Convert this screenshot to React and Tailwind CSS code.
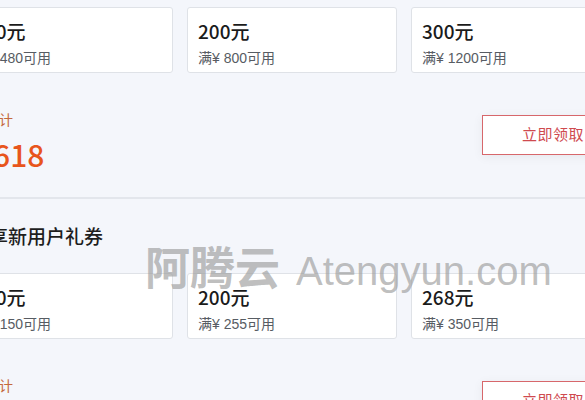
import React from "react";

const sections = [
  {
    heading: null,
    coupons: [
      { amount: "100元", cond: "满¥ 480可用" },
      { amount: "200元", cond: "满¥ 800可用" },
      { amount: "300元", cond: "满¥ 1200可用" },
    ],
    total: "¥618",
  },
  {
    heading: "享新用户礼券",
    coupons: [
      { amount: "100元", cond: "满¥ 150可用" },
      { amount: "200元", cond: "满¥ 255可用" },
      { amount: "268元", cond: "满¥ 350可用" },
    ],
    total: "¥568",
  },
];

const cjkMedium = { fontFamily: '"Noto Sans CJK SC", "Liberation Sans", sans-serif' };

function Coupon({ amount, cond }) {
  return (
    <div className="bg-white border border-[#dfe2e7] rounded-[3px] pl-[10px] pt-[10px] pb-[4px]">
      <div className="text-[19px] leading-[26px] font-medium text-[#1b1b1b]" style={cjkMedium}>
        {amount}
      </div>
      <div className="mt-[4px] text-[14px] leading-[20px] text-[#575c63]">{cond}</div>
    </div>
  );
}

function Section({ heading, coupons, total }) {
  return (
    <div>
      {heading && (
        <div className="pt-[23px] pl-[26px] text-[19px] leading-[28px] font-medium text-[#1e1e1e]" style={cjkMedium}>
          {heading}
        </div>
      )}
      <div className={`grid grid-cols-[210px_210px_210px] gap-[14px] ${heading ? "mt-[23px]" : ""}`}>
        {coupons.map((c, i) => (
          <Coupon key={i} {...c} />
        ))}
      </div>
      <div className="mt-[37px] flex items-start justify-between pl-[22px]">
        <div>
          <div className="text-[14px] leading-[20px] text-[#c5693d]">合计</div>
          <div
            className="mt-[5px] ml-[-9px] text-[30px] leading-[38px] font-medium text-[#e8551c]"
            style={cjkMedium}
          >
            {total}
          </div>
        </div>
        <button className="mt-[5px] w-[142px] h-[40px] bg-white border border-[#d7676b] text-[#cf4a4f] text-[15px] tracking-[0.5px] shadow-[0_2px_10px_rgba(0,0,0,0.06)]">
          立即领取
        </button>
      </div>
      <div className="mt-[24px] h-[2px] bg-[#e3e6ec]" />
    </div>
  );
}

export default function App() {
  return (
    <div
      className="relative w-[585px] h-[400px] overflow-hidden bg-[#f4f6fb]"
      style={{ fontFamily: '"Liberation Sans", "Noto Sans CJK SC", sans-serif' }}
    >
      <div className="ml-[-37px] w-[661px] pt-[7px]">
        {sections.map((s, i) => (
          <Section key={i} {...s} />
        ))}
      </div>
      <div className="absolute left-[145px] top-[238px] flex items-baseline pointer-events-none select-none text-[#9a9a9a]/65">
        <span className="text-[45px] leading-[56px] font-bold" style={{ fontFamily: '"Noto Sans CJK SC", sans-serif' }}>
          阿腾云
        </span>
        <span className="ml-[16px] text-[40px] leading-[56px]" style={{ fontFamily: '"Liberation Sans", sans-serif' }}>
          Atengyun.com
        </span>
      </div>
    </div>
  );
}
